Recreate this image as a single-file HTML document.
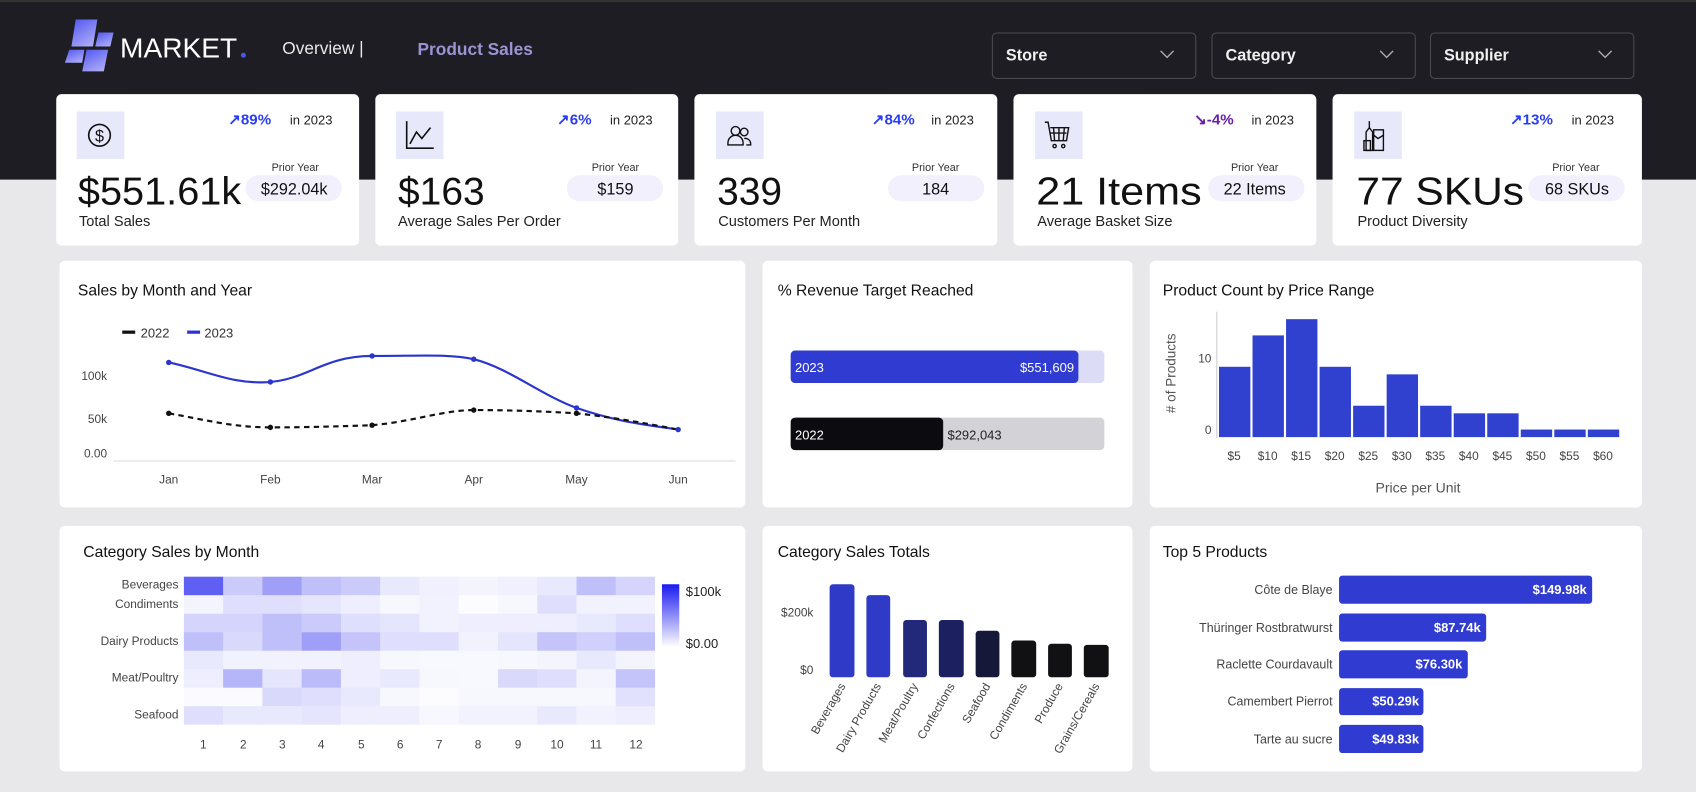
<!DOCTYPE html>
<html><head><meta charset="utf-8"><style>
html,body{margin:0;padding:0;width:1696px;height:792px;overflow:hidden;background:#e8e7ea}
svg{display:block}
text{font-family:"Liberation Sans",sans-serif}
</style></head><body>
<svg width="1696" height="792" viewBox="0 0 1568 732" preserveAspectRatio="none" xmlns="http://www.w3.org/2000/svg">
<defs>
<linearGradient id="lg" x1="0" y1="0" x2="0.6" y2="1"><stop offset="0" stop-color="#4f55f2"/><stop offset="1" stop-color="#a9a8f6"/></linearGradient>
<linearGradient id="cb" x1="0" y1="0" x2="0" y2="1"><stop offset="0" stop-color="#1a1af0"/><stop offset="1" stop-color="#ffffff"/></linearGradient>
</defs>
<rect width="1568" height="732" fill="#e8e7ea"/>
<rect width="1568" height="166" fill="#1e1d23"/>
<rect width="1568" height="2" fill="#333"/>
<!-- logo -->
<polygon points="70,18 90,18 86,43 66,43" fill="url(#lg)"/>
<polygon points="91,30 105,30 102,43 88,43" fill="url(#lg)"/>
<polygon points="64,46 78,46 76,58 60,58" fill="url(#lg)"/>
<polygon points="80,46 100,46 96,66 76,66" fill="url(#lg)"/>
<text x="111" y="53" font-size="26" fill="#fff">MARKET</text>
<circle cx="225" cy="51" r="2.3" fill="#4a55f0"/>
<text x="261" y="50" font-size="16" fill="#e8e8e8">Overview |</text>
<text x="386" y="51" font-size="16" font-weight="bold" fill="#9a94d4">Product Sales</text>
<!-- dropdowns -->
<g fill="none" stroke="#4a4a52" stroke-width="1">
<rect x="917.5" y="30.5" width="188" height="42" rx="4"/>
<rect x="1120.5" y="30.5" width="188" height="42" rx="4"/>
<rect x="1322.5" y="30.5" width="188" height="42" rx="4"/>
</g>
<g font-size="15" font-weight="bold" fill="#f0f0f0">
<text x="930" y="56">Store</text><text x="1133" y="56">Category</text><text x="1335" y="56">Supplier</text>
</g>
<g fill="none" stroke="#aaa" stroke-width="1.3">
<polyline points="1073,47 1079,53 1085,47"/><polyline points="1276,47 1282,53 1288,47"/><polyline points="1478,47 1484,53 1490,47"/>
</g>
<!-- KPI cards -->
<g fill="#fff">
<rect x="52" y="87" width="280" height="140" rx="5"/>
<rect x="347" y="87" width="280" height="140" rx="5"/>
<rect x="642" y="87" width="280" height="140" rx="5"/>
<rect x="937" y="87" width="280" height="140" rx="5"/>
<rect x="1232" y="87" width="286" height="140" rx="5"/>
</g>
<g fill="#e8e8fb">
<rect x="71" y="103" width="44" height="44"/><rect x="366" y="103" width="44" height="44"/><rect x="662" y="103" width="44" height="44"/><rect x="957" y="103" width="44" height="44"/><rect x="1252" y="103" width="44" height="44"/>
</g>
<!-- icons -->
<circle cx="92" cy="125" r="10" fill="none" stroke="#111" stroke-width="1.5"/>
<text x="92" y="131" font-size="15" text-anchor="middle" fill="#111">$</text>
<polyline points="376,112 376,137 401,137" fill="none" stroke="#111" stroke-width="1.5"/>
<polyline points="379,133 385,122 390,128 398,118" fill="none" stroke="#111" stroke-width="1.5"/>
<g fill="none" stroke="#111" stroke-width="1.3">
<circle cx="680" cy="121" r="4"/><path d="M673,134 v-2 a5,5 0 0 1 14,0 v2 z"/>
<circle cx="688" cy="122" r="3.5"/><path d="M688,128 a5,5 0 0 1 6,5 v1 h-4"/>
<path d="M966,113 h3 l3,17 h14 l2,-12 h-17"/><line x1="974" y1="118" x2="975" y2="130"/><line x1="979" y1="118" x2="979" y2="130"/><line x1="984" y1="118" x2="983" y2="130"/><line x1="971" y1="123" x2="986" y2="123"/>
<circle cx="975" cy="135" r="1.5"/><circle cx="983" cy="135" r="1.5"/>
<path d="M1266,112 v6 l-3,4 v17 h6 v-17 l-3,-4 z"/><rect x="1270" y="120" width="9" height="19"/><rect x="1261" y="130" width="6" height="9"/><path d="M1270,125 l4,3 l5,-3"/>
</g>
<!-- changes -->
<g font-size="14" font-weight="bold">
<text x="211" y="115" fill="#2a3df5">↗89%</text>
<text x="515" y="115" fill="#2a3df5">↗6%</text>
<text x="806" y="115" fill="#2a3df5">↗84%</text>
<text x="1104" y="115" fill="#6a1fa6">↘-4%</text>
<text x="1396" y="115" fill="#2a3df5">↗13%</text>
</g>
<g font-size="12" fill="#222">
<text x="268" y="115">in 2023</text><text x="564" y="115">in 2023</text><text x="861" y="115">in 2023</text><text x="1157" y="115">in 2023</text><text x="1453" y="115">in 2023</text>
</g>
<g font-size="10" fill="#333" text-anchor="middle">
<text x="273" y="158">Prior Year</text><text x="569" y="158">Prior Year</text><text x="865" y="158">Prior Year</text><text x="1160" y="158">Prior Year</text><text x="1457" y="158">Prior Year</text>
</g>
<g fill="#f1f0fc">
<rect x="227" y="162" width="89" height="24" rx="12"/><rect x="524" y="162" width="89" height="24" rx="12"/><rect x="821" y="162" width="89" height="24" rx="12"/><rect x="1117" y="162" width="89" height="24" rx="12"/><rect x="1413" y="162" width="89" height="24" rx="12"/>
</g>
<g font-size="15" fill="#111" text-anchor="middle">
<text x="272" y="180">$292.04k</text><text x="569" y="180">$159</text><text x="865" y="180">184</text><text x="1160" y="180">22 Items</text><text x="1458" y="180">68 SKUs</text>
</g>
<g font-size="36" fill="#111">
<text x="72" y="189" textLength="151" lengthAdjust="spacingAndGlyphs">$551.61k</text>
<text x="368" y="189">$163</text>
<text x="663" y="189">339</text>
<text x="958" y="189" textLength="153" lengthAdjust="spacingAndGlyphs">21 Items</text>
<text x="1254" y="189" textLength="155" lengthAdjust="spacingAndGlyphs">77 SKUs</text>
</g>
<g font-size="13.5" fill="#222">
<text x="73" y="209">Total Sales</text><text x="368" y="209">Average Sales Per Order</text><text x="664" y="209">Customers Per Month</text><text x="959" y="209">Average Basket Size</text><text x="1255" y="209">Product Diversity</text>
</g>
<!-- row 2/3 cards -->
<g fill="#fff">
<rect x="55" y="241" width="634" height="228" rx="5"/>
<rect x="705" y="241" width="342" height="228" rx="5"/>
<rect x="1063" y="241" width="455" height="228" rx="5"/>
<rect x="55" y="486" width="634" height="227" rx="5"/>
<rect x="705" y="486" width="342" height="227" rx="5"/>
<rect x="1063" y="486" width="455" height="227" rx="5"/>
</g>
<g font-size="14.5" fill="#111">
<text x="72" y="273">Sales by Month and Year</text>
<text x="719" y="273">% Revenue Target Reached</text>
<text x="1075" y="273">Product Count by Price Range</text>
<text x="77" y="515">Category Sales by Month</text>
<text x="719" y="515">Category Sales Totals</text>
<text x="1075" y="515">Top 5 Products</text>
</g>
<!-- line chart -->
<line x1="113" y1="307" x2="125" y2="307" stroke="#111" stroke-width="3"/><text x="130" y="312" font-size="12" fill="#333">2022</text>
<line x1="173" y1="307" x2="185" y2="307" stroke="#2a35d0" stroke-width="3"/><text x="189" y="312" font-size="12" fill="#333">2023</text>
<g font-size="11" fill="#444" text-anchor="end"><text x="99" y="351">100k</text><text x="99" y="391">50k</text><text x="99" y="423">0.00</text></g>
<line x1="105" y1="426" x2="680" y2="426" stroke="#ddd"/>
<g font-size="11" fill="#444" text-anchor="middle"><text x="156" y="447">Jan</text><text x="250" y="447">Feb</text><text x="344" y="447">Mar</text><text x="438" y="447">Apr</text><text x="533" y="447">May</text><text x="627" y="447">Jun</text></g>
<path d="M156,335 C190,342 215,356 250,353 C285,350 300,329 344,329 C390,329 415,327 438,332 C470,340 500,365 533,377 C570,390 600,393 627,397" fill="none" stroke="#2a35d0" stroke-width="2"/>
<path d="M156,382 C190,388 215,395 250,395 C285,395 315,394 344,393 C380,390 410,379 438,379 C470,379 500,380 533,382 C570,386 600,392 627,397" fill="none" stroke="#111" stroke-width="2" stroke-dasharray="5,4"/>
<g fill="#2a35d0"><circle cx="156" cy="335" r="2.5"/><circle cx="250" cy="353" r="2.5"/><circle cx="344" cy="329" r="2.5"/><circle cx="438" cy="332" r="2.5"/><circle cx="533" cy="377" r="2.5"/><circle cx="627" cy="397" r="2.5"/></g>
<g fill="#111"><circle cx="156" cy="382" r="2.5"/><circle cx="250" cy="395" r="2.5"/><circle cx="344" cy="393" r="2.5"/><circle cx="438" cy="379" r="2.5"/><circle cx="533" cy="382" r="2.5"/></g>
<!-- revenue -->
<rect x="731" y="324" width="290" height="30" rx="4" fill="#dcdcf6"/>
<rect x="731" y="324" width="266" height="30" rx="4" fill="#2f3bd1"/>
<text x="735" y="344" font-size="12" fill="#fff">2023</text><text x="993" y="344" font-size="12" fill="#fff" text-anchor="end">$551,609</text>
<rect x="731" y="386" width="290" height="30" rx="4" fill="#d3d2d6"/>
<rect x="731" y="386" width="141" height="30" rx="4" fill="#0c0c10"/>
<text x="735" y="406" font-size="12" fill="#fff">2022</text><text x="876" y="406" font-size="12" fill="#222">$292,043</text>
<!-- histogram -->
<line x1="1125" y1="288" x2="1125" y2="405" stroke="#ccc"/>
<g font-size="11" fill="#444" text-anchor="end"><text x="1120" y="335">10</text><text x="1120" y="401">0</text></g>
<text transform="translate(1087,345) rotate(-90)" font-size="12.5" fill="#555" text-anchor="middle"># of Products</text>
<g fill="#3040cf">
<rect x="1127" y="339" width="29" height="65"/><rect x="1158" y="310" width="29" height="94"/><rect x="1189" y="295" width="29" height="109"/><rect x="1220" y="339" width="29" height="65"/><rect x="1251" y="375" width="29" height="29"/><rect x="1282" y="346" width="29" height="58"/><rect x="1313" y="375" width="29" height="29"/><rect x="1344" y="382" width="29" height="22"/><rect x="1375" y="382" width="29" height="22"/><rect x="1406" y="397" width="29" height="7"/><rect x="1437" y="397" width="29" height="7"/><rect x="1468" y="397" width="29" height="7"/>
</g>
<g font-size="11" fill="#444" text-anchor="middle"><text x="1141" y="425">$5</text><text x="1172" y="425">$10</text><text x="1203" y="425">$15</text><text x="1234" y="425">$20</text><text x="1265" y="425">$25</text><text x="1296" y="425">$30</text><text x="1327" y="425">$35</text><text x="1358" y="425">$40</text><text x="1389" y="425">$45</text><text x="1420" y="425">$50</text><text x="1451" y="425">$55</text><text x="1482" y="425">$60</text></g>
<text x="1311" y="455" font-size="13" fill="#555" text-anchor="middle">Price per Unit</text>
<!-- heatmap -->
<g font-size="11" fill="#444" text-anchor="end"><text x="165" y="544">Beverages</text><text x="165" y="562">Condiments</text><text x="165" y="596">Dairy Products</text><text x="165" y="630">Meat/Poultry</text><text x="165" y="664">Seafood</text></g>
<g fill="#2a2af0">
<rect x="170" y="533" width="36.3" height="17.1" fill-opacity=".75"/><rect x="206.3" y="533" width="36.3" height="17.1" fill-opacity=".25"/><rect x="242.6" y="533" width="36.3" height="17.1" fill-opacity=".45"/><rect x="278.9" y="533" width="36.3" height="17.1" fill-opacity=".3"/><rect x="315.2" y="533" width="36.3" height="17.1" fill-opacity=".25"/><rect x="351.5" y="533" width="36.3" height="17.1" fill-opacity=".1"/><rect x="387.8" y="533" width="36.3" height="17.1" fill-opacity=".07"/><rect x="424.1" y="533" width="36.3" height="17.1" fill-opacity=".05"/><rect x="460.4" y="533" width="36.3" height="17.1" fill-opacity=".07"/><rect x="496.7" y="533" width="36.3" height="17.1" fill-opacity=".1"/><rect x="533" y="533" width="36.3" height="17.1" fill-opacity=".3"/><rect x="569.3" y="533" width="36.3" height="17.1" fill-opacity=".2"/>
<rect x="170" y="550.1" width="36.3" height="17.1" fill-opacity=".05"/><rect x="206.3" y="550.1" width="36.3" height="17.1" fill-opacity=".15"/><rect x="242.6" y="550.1" width="36.3" height="17.1" fill-opacity=".15"/><rect x="278.9" y="550.1" width="36.3" height="17.1" fill-opacity=".12"/><rect x="315.2" y="550.1" width="36.3" height="17.1" fill-opacity=".08"/><rect x="351.5" y="550.1" width="36.3" height="17.1" fill-opacity=".04"/><rect x="387.8" y="550.1" width="36.3" height="17.1" fill-opacity=".06"/><rect x="424.1" y="550.1" width="36.3" height="17.1" fill-opacity=".01"/><rect x="460.4" y="550.1" width="36.3" height="17.1" fill-opacity=".04"/><rect x="496.7" y="550.1" width="36.3" height="17.1" fill-opacity=".15"/><rect x="533" y="550.1" width="36.3" height="17.1" fill-opacity=".06"/><rect x="569.3" y="550.1" width="36.3" height="17.1" fill-opacity=".06"/>
<rect x="170" y="567.2" width="36.3" height="17.1" fill-opacity=".2"/><rect x="206.3" y="567.2" width="36.3" height="17.1" fill-opacity=".2"/><rect x="242.6" y="567.2" width="36.3" height="17.1" fill-opacity=".3"/><rect x="278.9" y="567.2" width="36.3" height="17.1" fill-opacity=".25"/><rect x="315.2" y="567.2" width="36.3" height="17.1" fill-opacity=".15"/><rect x="351.5" y="567.2" width="36.3" height="17.1" fill-opacity=".12"/><rect x="387.8" y="567.2" width="36.3" height="17.1" fill-opacity=".06"/><rect x="424.1" y="567.2" width="36.3" height="17.1" fill-opacity=".08"/><rect x="460.4" y="567.2" width="36.3" height="17.1" fill-opacity=".08"/><rect x="496.7" y="567.2" width="36.3" height="17.1" fill-opacity=".08"/><rect x="533" y="567.2" width="36.3" height="17.1" fill-opacity=".1"/><rect x="569.3" y="567.2" width="36.3" height="17.1" fill-opacity=".15"/>
<rect x="170" y="584.3" width="36.3" height="17.1" fill-opacity=".3"/><rect x="206.3" y="584.3" width="36.3" height="17.1" fill-opacity=".18"/><rect x="242.6" y="584.3" width="36.3" height="17.1" fill-opacity=".3"/><rect x="278.9" y="584.3" width="36.3" height="17.1" fill-opacity=".45"/><rect x="315.2" y="584.3" width="36.3" height="17.1" fill-opacity=".28"/><rect x="351.5" y="584.3" width="36.3" height="17.1" fill-opacity=".15"/><rect x="387.8" y="584.3" width="36.3" height="17.1" fill-opacity=".15"/><rect x="424.1" y="584.3" width="36.3" height="17.1" fill-opacity=".06"/><rect x="460.4" y="584.3" width="36.3" height="17.1" fill-opacity=".12"/><rect x="496.7" y="584.3" width="36.3" height="17.1" fill-opacity=".28"/><rect x="533" y="584.3" width="36.3" height="17.1" fill-opacity=".22"/><rect x="569.3" y="584.3" width="36.3" height="17.1" fill-opacity=".3"/>
<rect x="170" y="601.4" width="36.3" height="17.1" fill-opacity=".1"/><rect x="206.3" y="601.4" width="36.3" height="17.1" fill-opacity=".06"/><rect x="242.6" y="601.4" width="36.3" height="17.1" fill-opacity=".06"/><rect x="278.9" y="601.4" width="36.3" height="17.1" fill-opacity=".06"/><rect x="315.2" y="601.4" width="36.3" height="17.1" fill-opacity=".08"/><rect x="351.5" y="601.4" width="36.3" height="17.1" fill-opacity=".04"/><rect x="387.8" y="601.4" width="36.3" height="17.1" fill-opacity=".03"/><rect x="424.1" y="601.4" width="36.3" height="17.1" fill-opacity=".03"/><rect x="460.4" y="601.4" width="36.3" height="17.1" fill-opacity=".04"/><rect x="496.7" y="601.4" width="36.3" height="17.1" fill-opacity=".05"/><rect x="533" y="601.4" width="36.3" height="17.1" fill-opacity=".1"/><rect x="569.3" y="601.4" width="36.3" height="17.1" fill-opacity=".05"/>
<rect x="170" y="618.5" width="36.3" height="17.1" fill-opacity=".08"/><rect x="206.3" y="618.5" width="36.3" height="17.1" fill-opacity=".35"/><rect x="242.6" y="618.5" width="36.3" height="17.1" fill-opacity=".12"/><rect x="278.9" y="618.5" width="36.3" height="17.1" fill-opacity=".32"/><rect x="315.2" y="618.5" width="36.3" height="17.1" fill-opacity=".08"/><rect x="351.5" y="618.5" width="36.3" height="17.1" fill-opacity=".1"/><rect x="387.8" y="618.5" width="36.3" height="17.1" fill-opacity=".04"/><rect x="424.1" y="618.5" width="36.3" height="17.1" fill-opacity=".03"/><rect x="460.4" y="618.5" width="36.3" height="17.1" fill-opacity=".18"/><rect x="496.7" y="618.5" width="36.3" height="17.1" fill-opacity=".15"/><rect x="533" y="618.5" width="36.3" height="17.1" fill-opacity=".05"/><rect x="569.3" y="618.5" width="36.3" height="17.1" fill-opacity=".28"/>
<rect x="170" y="635.6" width="36.3" height="17.1" fill-opacity=".02"/><rect x="206.3" y="635.6" width="36.3" height="17.1" fill-opacity=".02"/><rect x="242.6" y="635.6" width="36.3" height="17.1" fill-opacity=".18"/><rect x="278.9" y="635.6" width="36.3" height="17.1" fill-opacity=".15"/><rect x="315.2" y="635.6" width="36.3" height="17.1" fill-opacity=".1"/><rect x="351.5" y="635.6" width="36.3" height="17.1" fill-opacity=".04"/><rect x="387.8" y="635.6" width="36.3" height="17.1" fill-opacity=".01"/><rect x="424.1" y="635.6" width="36.3" height="17.1" fill-opacity=".04"/><rect x="460.4" y="635.6" width="36.3" height="17.1" fill-opacity=".04"/><rect x="496.7" y="635.6" width="36.3" height="17.1" fill-opacity=".04"/><rect x="533" y="635.6" width="36.3" height="17.1" fill-opacity=".04"/><rect x="569.3" y="635.6" width="36.3" height="17.1" fill-opacity=".14"/>
<rect x="170" y="652.7" width="36.3" height="17.1" fill-opacity=".15"/><rect x="206.3" y="652.7" width="36.3" height="17.1" fill-opacity=".1"/><rect x="242.6" y="652.7" width="36.3" height="17.1" fill-opacity=".1"/><rect x="278.9" y="652.7" width="36.3" height="17.1" fill-opacity=".12"/><rect x="315.2" y="652.7" width="36.3" height="17.1" fill-opacity=".08"/><rect x="351.5" y="652.7" width="36.3" height="17.1" fill-opacity=".08"/><rect x="387.8" y="652.7" width="36.3" height="17.1" fill-opacity=".04"/><rect x="424.1" y="652.7" width="36.3" height="17.1" fill-opacity=".06"/><rect x="460.4" y="652.7" width="36.3" height="17.1" fill-opacity=".06"/><rect x="496.7" y="652.7" width="36.3" height="17.1" fill-opacity=".1"/><rect x="533" y="652.7" width="36.3" height="17.1" fill-opacity=".06"/><rect x="569.3" y="652.7" width="36.3" height="17.1" fill-opacity=".08"/>
</g>
<g font-size="11" fill="#444" text-anchor="middle"><text x="188" y="692">1</text><text x="225" y="692">2</text><text x="261" y="692">3</text><text x="297" y="692">4</text><text x="334" y="692">5</text><text x="370" y="692">6</text><text x="406" y="692">7</text><text x="442" y="692">8</text><text x="479" y="692">9</text><text x="515" y="692">10</text><text x="551" y="692">11</text><text x="588" y="692">12</text></g>
<rect x="612" y="540" width="16" height="58" fill="url(#cb)"/>
<text x="634" y="551" font-size="12" fill="#222">$100k</text><text x="634" y="599" font-size="12" fill="#222">$0.00</text>
<!-- category totals -->
<g font-size="11" fill="#444" text-anchor="end"><text x="752" y="570">$200k</text><text x="752" y="623">$0</text></g>
<rect x="767" y="540" width="23" height="86" rx="3" fill="#2f3bc6"/>
<rect x="801" y="550" width="22" height="76" rx="3" fill="#2f3bc6"/>
<rect x="835" y="573" width="22" height="53" rx="3" fill="#22287a"/>
<rect x="868" y="573" width="23" height="53" rx="3" fill="#1c2060"/>
<rect x="902" y="583" width="22" height="43" rx="3" fill="#151838"/>
<rect x="935" y="592" width="23" height="34" rx="3" fill="#111114"/>
<rect x="969" y="595" width="22" height="31" rx="3" fill="#111114"/>
<rect x="1002" y="596" width="23" height="30" rx="3" fill="#111114"/>
<g font-size="11" fill="#444" text-anchor="end">
<text transform="translate(782,634) rotate(-60)">Beverages</text>
<text transform="translate(815,634) rotate(-60)">Dairy Products</text>
<text transform="translate(849,634) rotate(-60)">Meat/Poultry</text>
<text transform="translate(883,634) rotate(-60)">Confections</text>
<text transform="translate(916,634) rotate(-60)">Seafood</text>
<text transform="translate(950,634) rotate(-60)">Condiments</text>
<text transform="translate(983,634) rotate(-60)">Produce</text>
<text transform="translate(1017,634) rotate(-60)">Grains/Cereals</text>
</g>
<!-- top 5 -->
<g fill="#2f3bd1">
<rect x="1238" y="532" width="234" height="26" rx="3"/><rect x="1238" y="567" width="136" height="26" rx="3"/><rect x="1238" y="601" width="119" height="26" rx="3"/><rect x="1238" y="636" width="78" height="25" rx="3"/><rect x="1238" y="670" width="78" height="26" rx="3"/>
</g>
<g font-size="11.5" fill="#444" text-anchor="end"><text x="1232" y="549">Côte de Blaye</text><text x="1232" y="584">Thüringer Rostbratwurst</text><text x="1232" y="618">Raclette Courdavault</text><text x="1232" y="652">Camembert Pierrot</text><text x="1232" y="687">Tarte au sucre</text></g>
<g font-size="12" font-weight="bold" fill="#fff" text-anchor="end"><text x="1467" y="549">$149.98k</text><text x="1369" y="584">$87.74k</text><text x="1352" y="618">$76.30k</text><text x="1312" y="652">$50.29k</text><text x="1312" y="687">$49.83k</text></g>
</svg>
</body></html>
